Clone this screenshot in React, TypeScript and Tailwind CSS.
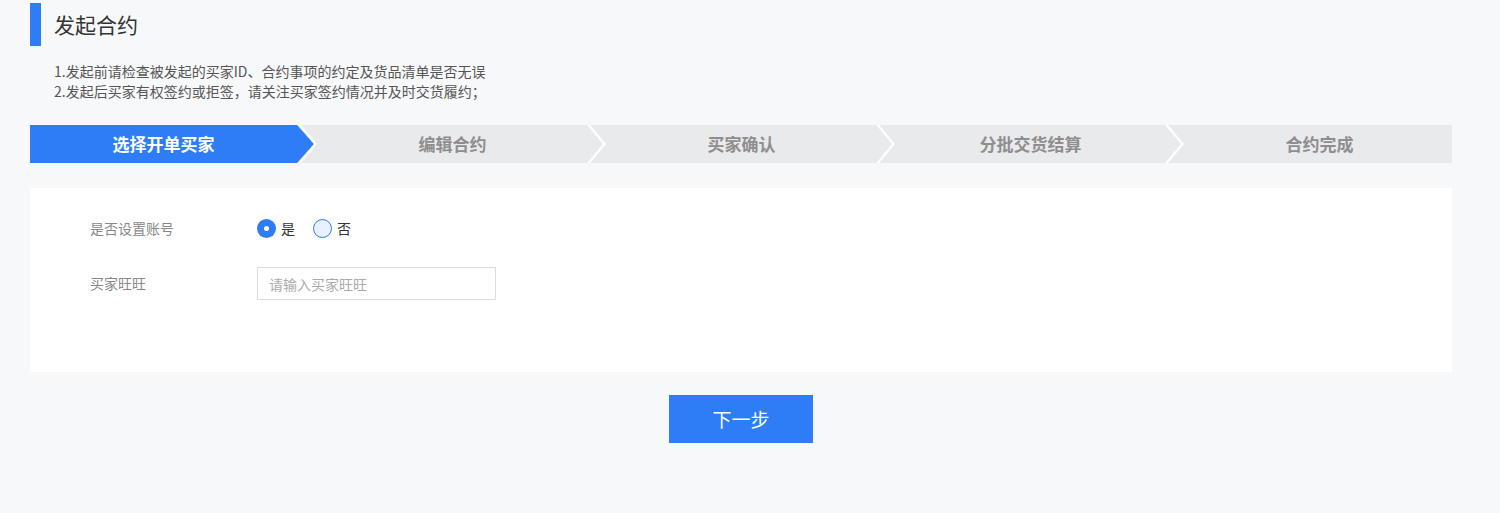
import React, { useState } from 'react';

const steps = ['选择开单买家', '编辑合约', '买家确认', '分批交货结算', '合约完成'];

const StepBar: React.FC<{ current: number }> = ({ current }) => (
  <div className="flex h-[38px] w-full overflow-hidden bg-[#e9eaec]">
    {steps.map((label, i) => (
      <div key={label} className="relative h-[38px] w-[289px] shrink-0">
        <svg className="absolute left-0 top-0 overflow-visible" width="289" height="38">
          {i === current && (
            <polygon points="0,0 267,0 284,19 267,38 0,38" fill="#2e7cf6" />
          )}
          <polyline
            points="268,-2 285.5,19 268,40"
            fill="none"
            stroke="#ffffff"
            strokeWidth="2.2"
          />
        </svg>
        <span
          className={
            i === current
              ? 'relative block w-[267px] text-center text-[17px] font-bold leading-[38px] text-white'
              : 'relative block w-[267px] text-center text-[17px] font-bold leading-[38px] text-[#8e8e8e]'
          }
        >
          {label}
        </span>
      </div>
    ))}
  </div>
);

const Radio: React.FC<{ checked: boolean; label: string; onClick: () => void }> = ({ checked, label, onClick }) => (
  <button type="button" onClick={onClick} className="flex items-center gap-[5px]">
    {checked ? (
      <span className="flex h-[19px] w-[19px] items-center justify-center rounded-full bg-[#2e7cf6]">
        <span className="h-[5px] w-[5px] rounded-full bg-white" />
      </span>
    ) : (
      <span className="h-[19px] w-[19px] rounded-full border border-[#2e7cf6] bg-[#e8f1fd]" />
    )}
    <span className="text-[14px] text-[#333]">{label}</span>
  </button>
);

const App: React.FC = () => {
  const [hasAccount, setHasAccount] = useState(true);

  return (
    <div
      className="min-h-[513px] bg-[#f7f8fa] pt-[3px]"
      style={{ fontFamily: '"Noto Sans CJK SC", "Noto Sans", sans-serif' }}
    >
      <div className="ml-[30px] w-[1422px]">
        {/* Title */}
        <div className="flex items-center">
          <div className="h-[43px] w-[11px] bg-[#2e7cf6]" />
          <h1 className="ml-[13px] text-[21px] text-[#333]">发起合约</h1>
        </div>

        <div className="ml-[24px] mt-[15px] text-[14px] leading-[20px] text-[#555]">
          <p>1.发起前请检查被发起的买家ID、合约事项的约定及货品清单是否无误</p>
          <p>2.发起后买家有权签约或拒签，请关注买家签约情况并及时交货履约；</p>
        </div>

        <div className="mt-[24px]">
          <StepBar current={0} />
        </div>

        {/* Form */}
        <div className="mt-[25px] h-[184px] bg-white pl-[60px] pt-[23px]">
          <div className="flex h-[34px] items-center">
            <div className="w-[167px] text-[14px] text-[#888]">是否设置账号</div>
            <div className="flex items-center gap-[18px]">
              <Radio checked={hasAccount} label="是" onClick={() => setHasAccount(true)} />
              <Radio checked={!hasAccount} label="否" onClick={() => setHasAccount(false)} />
            </div>
          </div>
          <div className="mt-[22px] flex h-[33px] items-center">
            <div className="w-[167px] text-[14px] text-[#888]">买家旺旺</div>
            <input
              placeholder="请输入买家旺旺"
              className="h-[33px] w-[239px] border border-[#dcdcdc] px-[11px] text-[14px] text-[#333] outline-none placeholder:text-[#aaa]"
            />
          </div>
        </div>

        <div className="mt-[23px] flex justify-center">
          <button className="h-[48px] w-[144px] bg-[#2e7cf6] text-[19px] text-white">下一步</button>
        </div>
      </div>
    </div>
  );
};

export default App;
